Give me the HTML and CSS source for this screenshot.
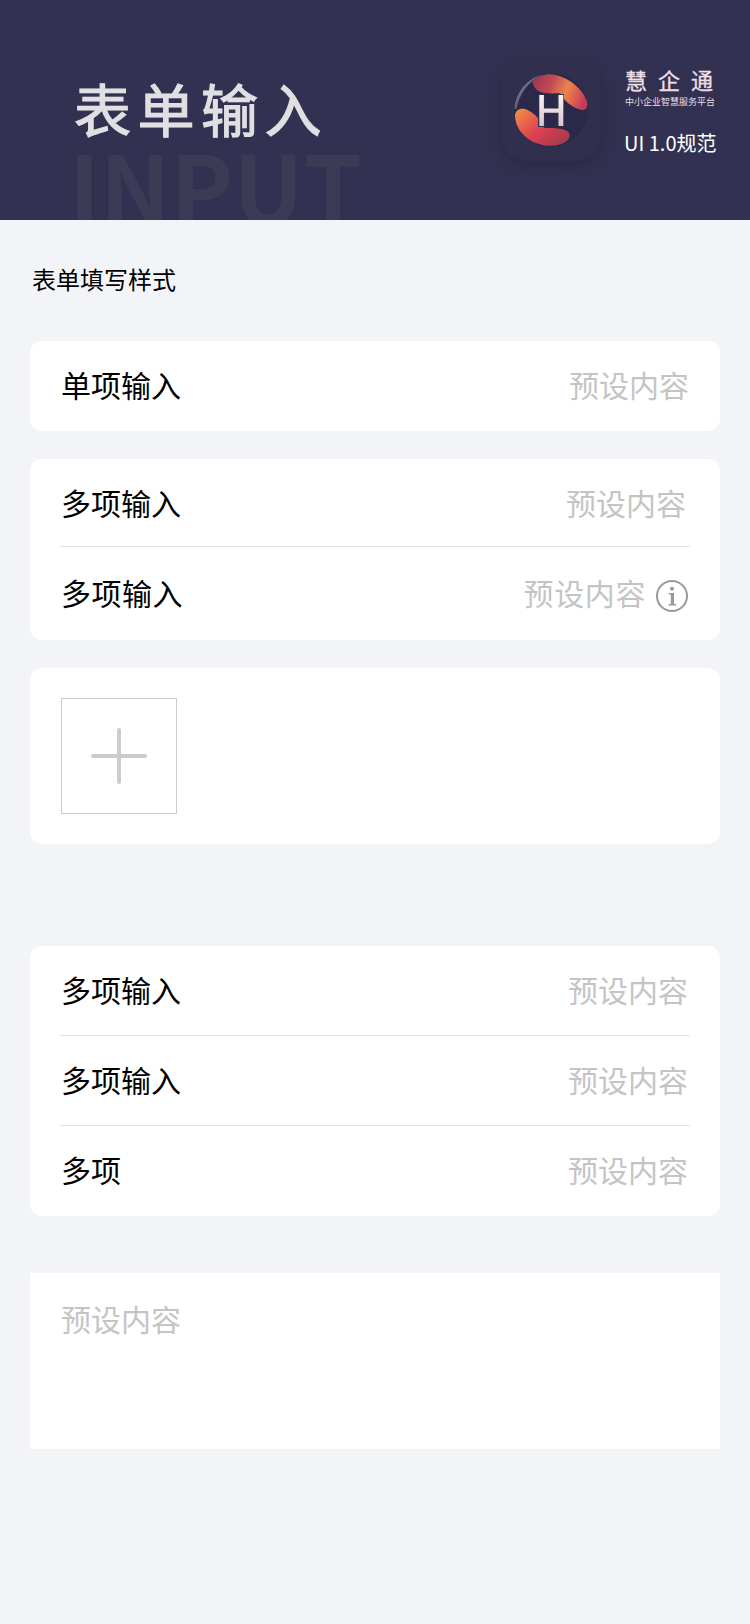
FILE: index.html
```html
<!DOCTYPE html>
<html lang="zh">
<head>
<meta charset="utf-8">
<title>表单输入</title>
<link rel="stylesheet" href="styles.css">
</head>
<body>
<header class="hero">
  <div class="hero-text">
    <h1 class="hero-title">表单输入</h1>
    <div class="hero-ghost">INPUT</div>
  </div>
  <div class="brand">
    <div class="app-icon">
      <svg viewBox="0 0 100 100" width="100" height="100">
        <defs>
          <linearGradient id="g1" x1="0.02" y1="0.4" x2="0.98" y2="0.65">
            <stop offset="0" stop-color="#a33a56"/>
            <stop offset="0.28" stop-color="#c24a54"/>
            <stop offset="0.6" stop-color="#ec854c"/>
            <stop offset="0.8" stop-color="#dc5f50"/>
            <stop offset="1" stop-color="#c5385c"/>
          </linearGradient>
          <linearGradient id="g2" x1="0.05" y1="0.05" x2="0.95" y2="0.8">
            <stop offset="0" stop-color="#ee8d47"/>
            <stop offset="0.5" stop-color="#e04550"/>
            <stop offset="0.78" stop-color="#c43b50"/>
            <stop offset="1" stop-color="#a53c50"/>
          </linearGradient>
          <linearGradient id="g3" x1="0" y1="0" x2="1" y2="1">
            <stop offset="0" stop-color="#8f8da2"/>
            <stop offset="1" stop-color="#34334f"/>
          </linearGradient>
          <linearGradient id="g4" x1="0" y1="0" x2="0" y2="1">
            <stop offset="0" stop-color="#f8f2f3"/>
            <stop offset="1" stop-color="#dcc6cb"/>
          </linearGradient>
        </defs>
        <circle cx="50" cy="49" r="37" fill="#2a2949"/>
        <path d="M13.5 48C14 33 25 18 41 13.5C28 20 18 33 15.5 48Z" fill="url(#g3)"/>
        <path d="M31.3 20.7C35.7 15.7 42.3 13.3 49 13.3C65.7 14 84 29 86.3 42.3C86.7 47.3 84 49.7 80 48.7C70.7 46.7 62.3 39 59 32.3C54 32.3 44 33.3 37.3 30C34 28 32 24 31.3 20.7Z" fill="url(#g1)"/>
        <path d="M14 54C14.7 49 19 46.7 24 48C32.3 50.7 40 59 43.3 67.3C50.7 66.7 62.3 67.3 67.3 70.7C70 74 69 79 62.3 82.3C54 85.7 44 85.7 35.7 82.3C24 78 14 67.3 14 54Z" fill="url(#g2)"/>
        <path d="M37 33h7v14.500h11V33h8v33h-8V52H44v14h-7Z" fill="#2f2d4c"/>
        <path d="M38.3 34h4.6v13.500h14.600V34h4.800v31h-4.800V51.700H42.900V65h-4.600Z" fill="url(#g4)"/>
      </svg>
    </div>
    <div class="brand-text">
      <div class="brand-name">慧企通</div>
      <div class="brand-sub">中小企业智慧服务平台</div>
      <div class="brand-ver">UI 1.0规范</div>
    </div>
  </div>
</header>

<main class="content">
  <h2 class="section-title">表单填写样式</h2>

  <section class="card card-first">
    <div class="row row-90"><span class="label">单项输入</span><span class="value">预设内容</span></div>
  </section>

  <section class="card card-gap">
    <div class="row row-88 row-line"><span class="label">多项输入</span><span class="value value-shift">预设内容</span></div>
    <div class="row row-93"><span class="label label-wide">多项输入</span>
      <span class="value-group"><span class="value value-wide">预设内容</span>
        <svg class="info" viewBox="0 0 32 32" width="32" height="32">
          <circle cx="16" cy="16" r="15" fill="none" stroke="#999" stroke-width="2"/>
          <circle cx="16" cy="8.8" r="2" fill="#999"/>
          <path d="M12.8 13h5.2v11h2.2v1.4h-7.6V24h2.2V14.4h-2Z" fill="#999"/>
        </svg>
      </span>
    </div>
  </section>

  <section class="card card-gap upload-card">
    <div class="upload"><span class="plus"></span></div>
  </section>

  <section class="card card-far">
    <div class="row row-90 row-line"><span class="label">多项输入</span><span class="value value-far">预设内容</span></div>
    <div class="row row-90 row-line"><span class="label">多项输入</span><span class="value value-far">预设内容</span></div>
    <div class="row row-90"><span class="label">多项</span><span class="value value-far">预设内容</span></div>
  </section>

  <section class="textarea">预设内容</section>
</main>
</body>
</html>
```
FILE: styles.css
```css
* { box-sizing: border-box; }
html, body { margin: 0; padding: 0; }
body {
  width: 750px;
  min-height: 1624px;
  background: #f2f4f8;
  font-family: "Noto Sans CJK SC", "Noto Sans", sans-serif;
  color: #000;
}
.hero {
  height: 220px;
  background: #323151;
  display: flex;
  justify-content: space-between;
  overflow: hidden;
}
.hero-text { padding: 74px 0 0 74px; }
.hero-title {
  margin: 0;
  font-size: 57px;
  font-weight: 400;
  line-height: 66px;
  letter-spacing: 6.5px;
  color: #e0e0e2;
  -webkit-text-stroke: 1.2px #e0e0e2;
  white-space: nowrap;
}
.hero-ghost {
  margin: -3px 0 0 -5px;
  font-size: 94px;
  font-weight: 700;
  line-height: 94px;
  color: #3c3b55;
}
.brand { display: flex; padding: 61px 0 0 0; width: 249px; }
.app-icon {
  flex: none;
  width: 100px;
  height: 100px;
  border-radius: 26px;
  background: #302f4e;
  box-shadow: 0 4px 14px rgba(30, 29, 55, 0.45);
}
.app-icon svg { display: block; }
.brand-text { margin-left: 24px; color: #fff; }
.brand-name {
  margin-top: 6px;
  font-size: 22px;
  line-height: 24px;
  letter-spacing: 11px;
  color: #f0dfe2;
  -webkit-text-stroke: 0.3px #f0dfe2;
  white-space: nowrap;
}
.brand-sub {
  margin-top: 5px;
  font-size: 9px;
  line-height: 12px;
  color: #e8dfe4;
  white-space: nowrap;
}
.brand-ver {
  margin: 21px 0 0 -1px;
  font-size: 20px;
  line-height: 28px;
  white-space: nowrap;
}
.content { padding: 0 30px; }
.section-title {
  margin: 0;
  padding: 41px 0 0 2px;
  font-size: 24px;
  font-weight: 400;
  line-height: 36px;
}
.card { width: 690px; background: #fff; border-radius: 12px; overflow: hidden; }
.card-first { margin-top: 44px; }
.card-gap { margin-top: 28px; }
.card-far { margin-top: 102px; }
.row {
  margin: 0 30px;
  padding: 0 1px 4px;
  display: flex;
  align-items: center;
  justify-content: space-between;
}
.row-90 { height: 90px; }
.row-88 { height: 88px; padding-bottom: 2px; }
.row-93 { height: 93px; }
.row-line { border-bottom: 1px solid #e3e3e5; }
.label { font-size: 30px; line-height: 40px; }
.label-wide { letter-spacing: 0.5px; }
.value { font-size: 30px; line-height: 40px; color: #c4c4c4; }
.value-shift { margin-right: 3px; }
.value-far { margin-right: 1px; }
.value-wide { letter-spacing: 0.6px; }
.value-group { display: flex; align-items: center; gap: 10px; margin-right: 1px; }
.info { display: block; margin-top: 8px; }
.upload-card { height: 176px; padding: 30px 31px; }
.upload {
  width: 116px;
  height: 116px;
  border: 1px solid #cbcbcb;
  display: flex;
  align-items: center;
  justify-content: center;
}
.plus {
  position: relative;
  width: 56px;
  height: 56px;
}
.plus::before, .plus::after {
  content: "";
  position: absolute;
  background: #cccccc;
  border-radius: 2px;
}
.plus::before { left: 0; right: 0; top: 26px; height: 4px; }
.plus::after { top: 0; bottom: 0; left: 26px; width: 4px; }
.textarea {
  width: 690px;
  height: 176px;
  margin-top: 57px;
  padding: 25px 31px;
  background: #fff;
  font-size: 30px;
  line-height: 40px;
  color: #c4c4c4;
}
```
